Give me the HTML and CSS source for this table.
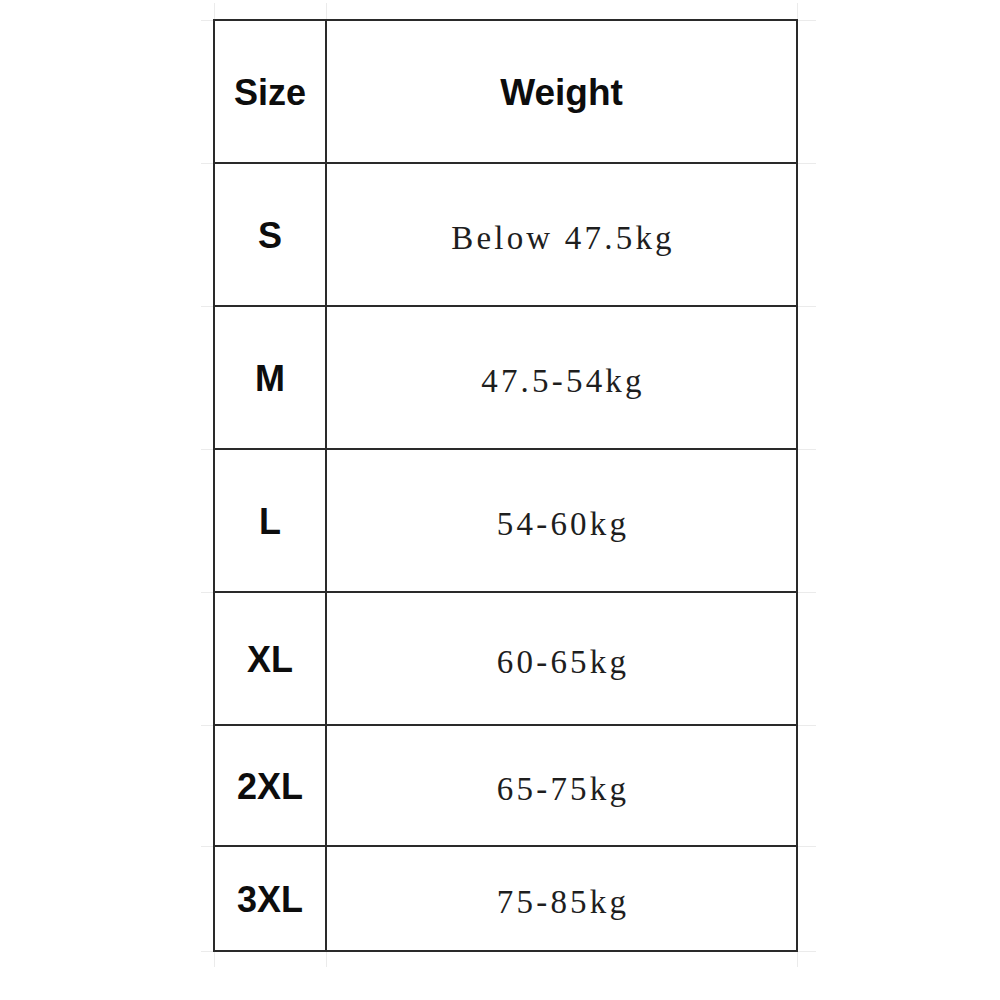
FILE: index.html
```html
<!DOCTYPE html>
<html>
<head>
<meta charset="utf-8">
<link rel="stylesheet" href="styles.css">
</head>
<body>
<div class="sheet">
  <div class="chart">
    <div class="cell size head">Size</div>
    <div class="cell head head-weight">Weight</div>
    <div class="cell size">S</div>
    <div class="cell val">Below 47.5kg</div>
    <div class="cell size">M</div>
    <div class="cell val">47.5-54kg</div>
    <div class="cell size">L</div>
    <div class="cell val">54-60kg</div>
    <div class="cell size">XL</div>
    <div class="cell val">60-65kg</div>
    <div class="cell size">2XL</div>
    <div class="cell val">65-75kg</div>
    <div class="cell size">3XL</div>
    <div class="cell val">75-85kg</div>
  </div>
</div>
</body>
</html>
```

FILE: styles.css
```css
html, body {
  margin: 0;
  padding: 0;
  background: #ffffff;
}

body {
  padding: 3px 0 0 201px;
}

.sheet {
  width: 585px;
  padding: 16px 18px 15px 12px;
  --g: #ebebeb;
  background:
    linear-gradient(var(--g), var(--g)) 13px 0 / 1px 100% no-repeat,
    linear-gradient(var(--g), var(--g)) 125px 0 / 1px 100% no-repeat,
    linear-gradient(var(--g), var(--g)) 596px 0 / 1px 100% no-repeat,
    linear-gradient(var(--g), var(--g)) 0 17px / 100% 1px no-repeat,
    linear-gradient(var(--g), var(--g)) 0 160px / 100% 1px no-repeat,
    linear-gradient(var(--g), var(--g)) 0 303px / 100% 1px no-repeat,
    linear-gradient(var(--g), var(--g)) 0 446px / 100% 1px no-repeat,
    linear-gradient(var(--g), var(--g)) 0 589px / 100% 1px no-repeat,
    linear-gradient(var(--g), var(--g)) 0 722px / 100% 1px no-repeat,
    linear-gradient(var(--g), var(--g)) 0 843px / 100% 1px no-repeat,
    linear-gradient(var(--g), var(--g)) 0 948px / 100% 1px no-repeat,
    #ffffff;
}

.chart {
  display: grid;
  grid-template-columns: 110px 469px;
  grid-template-rows: 141px 141px 141px 141px 131px 119px 103px;
  gap: 2px;
  border: 2px solid #2a2a2a;
  background: #2a2a2a;
  width: 581px;
}

.cell {
  background: #ffffff;
  display: flex;
  align-items: center;
  justify-content: center;
  color: #0d0d0d;
}

.size,
.head {
  font-family: "Liberation Sans", Arial, sans-serif;
  font-weight: bold;
  font-size: 36px;
  padding-top: 2px;
}

.head-weight {
  font-size: 37px;
}

.val {
  font-family: "Liberation Serif", "Times New Roman", serif;
  font-weight: normal;
  font-size: 33px;
  letter-spacing: 3.2px;
  color: #1e1e1e;
  padding-top: 8px;
  padding-left: 3px;
}
```
